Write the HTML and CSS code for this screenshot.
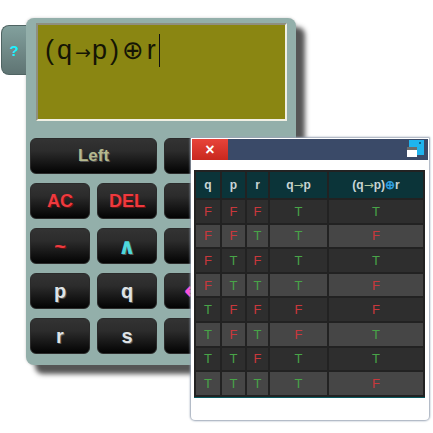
FILE: index.html
```html
<!DOCTYPE html>
<html lang="en">
<head>
  <meta charset="UTF-8">
  <title>Logic Calculator</title>
  <link rel="stylesheet" href="styles.css">
</head>
<body>
  <div class="calc">
    <button class="help">?</button>
    <div class="screen">(q<span class="arrow">→</span>p)<span class="oplus">⊕</span>r<span class="cursor"></span></div>
    <div class="keys">
      <button class="key wide left-key">Left</button>
      <button class="key wide"></button>
      <button class="key small red">AC</button>
      <button class="key small red">DEL</button>
      <button class="key"></button>
      <button class="key"></button>
      <button class="key red">~</button>
      <button class="key cyan">∧</button>
      <button class="key"></button>
      <button class="key"></button>
      <button class="key">p</button>
      <button class="key">q</button>
      <button class="key pink">↔</button>
      <button class="key"></button>
      <button class="key">r</button>
      <button class="key">s</button>
      <button class="key"></button>
      <button class="key"></button>
    </div>
  </div>

  <div class="window">
    <div class="titlebar">
      <button class="close">×</button>
      <svg class="win-icon" width="17" height="17" viewBox="0 0 17 17">
        <rect x="2" y="0" width="15" height="15" fill="#1fb4ee"/>
        <rect x="12" y="2" width="2" height="2" fill="#14628a"/>
        <rect x="0" y="7" width="10" height="10" fill="#fff"/>
        <rect x="0" y="7" width="10" height="3" fill="#6d6d6d"/>
      </svg>
    </div>
    <table class="truth">
      <thead>
        <tr>
          <th class="c1">q</th><th class="c2">p</th><th class="c3">r</th>
          <th class="c4">q<span class="th-arrow">→</span>p</th><th>(q<span class="th-arrow">→</span>p)<span class="xor">⊕</span>r</th>
        </tr>
      </thead>
      <tbody>
        <tr><td class="f">F</td><td class="f">F</td><td class="f">F</td><td class="t">T</td><td class="t">T</td></tr>
        <tr><td class="f">F</td><td class="f">F</td><td class="t">T</td><td class="t">T</td><td class="f">F</td></tr>
        <tr><td class="f">F</td><td class="t">T</td><td class="f">F</td><td class="t">T</td><td class="t">T</td></tr>
        <tr><td class="f">F</td><td class="t">T</td><td class="t">T</td><td class="t">T</td><td class="f">F</td></tr>
        <tr><td class="t">T</td><td class="f">F</td><td class="f">F</td><td class="f">F</td><td class="f">F</td></tr>
        <tr><td class="t">T</td><td class="f">F</td><td class="t">T</td><td class="f">F</td><td class="t">T</td></tr>
        <tr><td class="t">T</td><td class="t">T</td><td class="f">F</td><td class="t">T</td><td class="t">T</td></tr>
        <tr><td class="t">T</td><td class="t">T</td><td class="t">T</td><td class="t">T</td><td class="f">F</td></tr>
      </tbody>
    </table>
  </div>
</body>
</html>
```
FILE: styles.css
```css
html, body {
  margin: 0;
  height: 433px;
  overflow: hidden;
  background-color: #fff;
}
body {
  font-family: 'Liberation Sans', Arial, sans-serif;
  position: relative;
}
.calc {
  position: absolute;
  left: 26px;
  top: 18px;
  width: 270px;
  height: 347px;
  box-sizing: border-box;
  padding: 5px 4px 0;
  background-color: #93afaa;
  border-radius: 8px;
  box-shadow: 9px 9px 5px #555, 0 0 3px #ccc;
}
.help {
  position: absolute;
  left: -25px;
  top: 7px;
  width: 25px;
  height: 50px;
  padding: 0;
  border: 1px solid #4f6463;
  border-right: none;
  border-radius: 8px 0 0 8px;
  background: linear-gradient(#82a09d, #5f7473);
  color: #1ff0ff;
  font: bold 15px 'Liberation Sans', sans-serif;
}
.screen {
  box-sizing: border-box;
  width: 251px;
  height: 98px;
  margin: 0 0 17px 6px;
  padding: 9px 0 0 7px;
  background-color: #8a8612;
  border: 2px solid;
  border-color: #8f8f80 #f0f0e4 #f0f0e4 #8f8f80;
  color: #151505;
  font: 27px 'Liberation Sans', sans-serif;
  letter-spacing: 3px;
  white-space: nowrap;
}
.arrow {
  font: 19px 'DejaVu Sans', sans-serif;
  letter-spacing: 1px;
}
.oplus {
  font: 26px 'DejaVu Sans', sans-serif;
  letter-spacing: 3px;
}
.cursor {
  display: inline-block;
  width: 1px;
  height: 33px;
  vertical-align: -8px;
  background-color: #111;
}
.keys {
  display: grid;
  grid-template-columns: repeat(4, 60px);
  grid-auto-rows: 36px;
  column-gap: 7px;
  row-gap: 9px;
}
.key {
  padding: 0;
  border: 1px solid #2b2b2b;
  border-radius: 6px;
  background: linear-gradient(#333 0%, #2c2c2c 35%, #030303 100%);
  color: #dfe3e6;
  font: bold 20px 'Liberation Sans', sans-serif;
  text-shadow: 1px 1px 0 #555;
}
.wide {
  grid-column: span 2;
}
.small {
  font-size: 18px;
}
.left-key {
  color: #b5b98e;
  font-size: 17px;
}
.red {
  color: #ee3a3f;
  text-shadow: 1px 1px 0 #611;
}
.cyan {
  color: #4fd8dc;
  font: bold 22px 'DejaVu Sans', sans-serif;
}
.pink {
  color: #ff4fd8;
  font: bold 24px 'DejaVu Sans', sans-serif;
  text-shadow: none;
}
.window {
  position: absolute;
  left: 191px;
  top: 138px;
  width: 238px;
  height: 282px;
  box-sizing: border-box;
  padding: 0 1px;
  background-color: #fff;
  border-radius: 0 0 4px 4px;
  box-shadow: 0 0 2px 1px #9aa5b5;
}
.titlebar {
  display: flex;
  justify-content: space-between;
  align-items: flex-start;
  height: 21px;
  margin-top: 1px;
  padding-right: 4px;
  background-color: #3a4a68;
}
.close {
  width: 36px;
  height: 21px;
  padding: 0;
  border: none;
  background: linear-gradient(#e8443a, #c8281e);
  color: #fff;
  font: bold 16px 'Liberation Sans', sans-serif;
}
.win-icon {
  display: block;
  margin-top: 1px;
}
.truth {
  width: 231px;
  margin: 10px 0 0 2px;
  table-layout: fixed;
  border-collapse: separate;
  border-spacing: 2px;
  background-color: #222;
  border-bottom: 1px solid #0a5a60;
  font-family: 'Liberation Sans', sans-serif;
}
.truth th {
  height: 26px;
  padding: 0;
  background-color: #0b3439;
  color: #c8d4d6;
  font-size: 12px;
  font-weight: bold;
}
.th-arrow {
  font-family: 'DejaVu Sans', sans-serif;
  font-weight: normal;
  color: #b8c8a0;
}
.truth td {
  height: 22.6px;
  padding: 0;
  background-color: #2e2e2e;
  text-align: center;
  font-size: 13px;
}
.truth tbody tr:nth-child(even) td {
  background-color: #464646;
}
.c1 { width: 24px; }
.c2 { width: 23px; }
.c3 { width: 21px; }
.c4 { width: 57px; }
.xor { color: #2f9fe0; }
.f { color: #c8383c; }
.t { color: #48a448; }
```
